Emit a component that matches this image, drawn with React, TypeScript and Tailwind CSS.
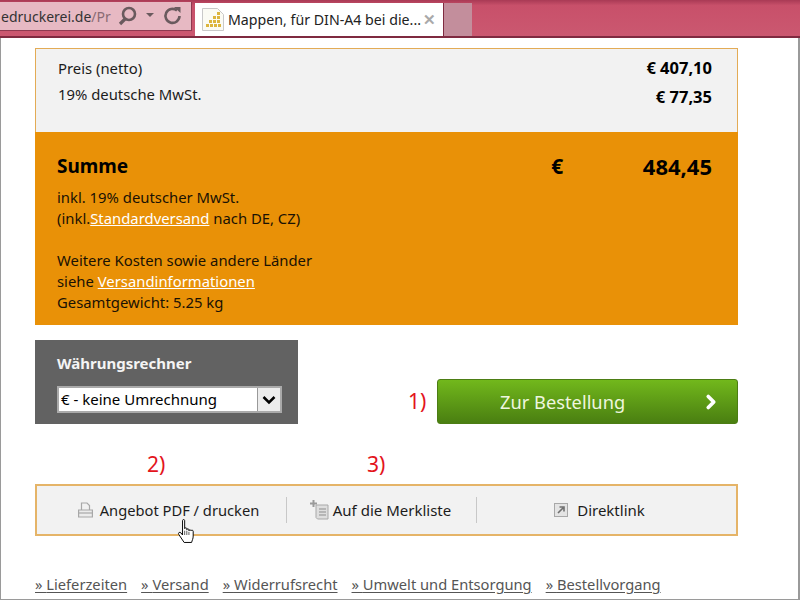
import { ChevronRight } from 'lucide-react';

const font = { fontFamily: '"Noto Sans", sans-serif' };

function PrintIcon() {
  return (
    <svg width="15" height="16" viewBox="0 0 15 16" fill="none" stroke="#a8a8a8" strokeWidth="1.200">
      <path d="M3.500 8V1h5.500L11.500 3.500V8" />
      <path d="M.600 8h13.800v7H.600z" fill="#ececec" />
      <path d="M.600 11h13.800" />
    </svg>
  );
}

function ListIcon() {
  return (
    <svg width="20" height="20" viewBox="0 0 20 20" fill="none">
      <path d="M3.500 0v7M0 3.500h7" stroke="#9a9a9a" strokeWidth="2" />
      <path d="M6 5h12v14H7.500L6 17.500z" fill="#dedede" stroke="#a8a8a8" />
      <path d="M9 9h7M9 12h7M9 15h7" stroke="#8d8d8d" />
    </svg>
  );
}

function LinkIcon() {
  return (
    <svg width="14" height="14" viewBox="0 0 14 14" fill="none">
      <rect x="0.500" y="0.500" width="13" height="13" fill="#e4e4e4" stroke="#a8a8a8" />
      <path d="M4 10l5-5M5.500 4H10v4.500" stroke="#6f6f6f" strokeWidth="1.600" />
    </svg>
  );
}

function HandCursor() {
  return (
    <svg width="18" height="24" viewBox="0 0 15.500 22.500">
      <path
        d="M4.500 1.500c0-1.300 2-1.300 2 0V9c0-1 2-1 2 0v1c0-1 2-1 2 0v1c0-1 2-1 2 0 .1-.7 2-.7 2 .5V16c0 2.500-1 4-1.500 6H6L1 14.500c-1-1.500.7-2.700 2-1.500l1.500 2z"
        fill="#fff"
        stroke="#000"
        strokeWidth="0.900"
        strokeLinejoin="round"
      />
      <path d="M6.500 11v4M8.500 11v4M10.500 12v3" stroke="#000" strokeWidth="0.600" />
    </svg>
  );
}

function BrowserBar() {
  return (
    <div className="flex h-[38px] items-end border-b-2 border-b-[#7f2a40] bg-gradient-to-b from-[#a93a55] via-[#c8506a] via-15% to-[#cb5870]">
      <div className="mb-[5px] flex h-[29px] w-[192px] items-center justify-between overflow-hidden border-r border-b border-[#8e3a50] bg-[#e7b9c3] pr-[8px]">
        <span className="whitespace-nowrap pl-[1px] text-[14px] text-[#333]">
          edruckerei.de<span className="text-[#8a6b73]">/Pr</span>
        </span>
        <svg width="66" height="20" viewBox="0 0 66 20" fill="none" stroke="#6a5a5e">
          <circle cx="12" cy="8" r="6" strokeWidth="2.600" />
          <path d="M8 13l-5 5" strokeWidth="3.200" />
          <path d="M29 7h8l-4 4z" fill="#6a5a5e" stroke="none" />
          <path d="M60 4.500a7 7 0 1 0 2.500 5.500" strokeWidth="2.600" />
          <path d="M57 1h6.500v6z" fill="#6a5a5e" stroke="none" />
        </svg>
      </div>
      <div className="ml-[3px] flex h-[33px] w-[248px] items-center bg-white pl-[7px] pr-[7px]">
        <svg width="22" height="23" viewBox="0 0 22 23" className="shrink-0">
          <path d="M.5.500h15l6 6v16H.5z" fill="#fbfbf4" stroke="#c9c9c9" />
          <g fill="#dcb53d">
            <rect x="15" y="4" width="3" height="3" />
            <rect x="11" y="8" width="3" height="3" />
            <rect x="15" y="8" width="3" height="3" />
            <rect x="7" y="12" width="3" height="3" />
            <rect x="11" y="12" width="3" height="3" />
            <rect x="15" y="12" width="3" height="3" />
            <rect x="4" y="16" width="3" height="3" />
            <rect x="8" y="16" width="3" height="3" />
            <rect x="12" y="16" width="3" height="3" />
            <rect x="16" y="16" width="3" height="3" />
          </g>
        </svg>
        <span className="ml-[4px] whitespace-nowrap text-[14.200px] text-[#222]">
          Mappen, für DIN-A4 bei die...
        </span>
        <span className="ml-auto text-[15px] font-bold leading-none text-[#a9a9a9]">✕</span>
      </div>
      <div className="h-[33px] w-[29px] border-l border-[#7f2a40] bg-[#c38e9c]" />
    </div>
  );
}

export default function App() {
  const links = ['Lieferzeiten', 'Versand', 'Widerrufsrecht', 'Umwelt und Entsorgung', 'Bestellvorgang'];

  return (
    <div className="relative h-[600px] w-[800px] overflow-hidden bg-white text-[14.850px] text-[#1c1c1c]" style={font}>
      <BrowserBar />
      <div className="h-[562px] border-x border-b border-[#9a9a9a] border-r-2 pl-[34px] pr-[60px] pt-[10px]">
        <div className="h-[84px] border border-b-0 border-[#e3ab55] bg-[#f2f2f2] pl-[22px] pr-[25px]">
          <div className="flex h-[36px] items-center justify-between pt-[3px]">
            <span>Preis (netto)</span>
            <span className="text-[16.500px] font-bold text-black">€ 407,10</span>
          </div>
          <div className="flex h-[24px] items-center justify-between">
            <span className="-mt-[5px]">19% deutsche MwSt.</span>
            <span className="text-[16.500px] font-bold text-black">€ 77,35</span>
          </div>
        </div>

        <div className="h-[193px] bg-[#e99107] pl-[22px] pr-[26px] pt-[21px] leading-[21px] text-[#1a1204]">
          <div className="flex h-[26px] items-center text-[19px] font-bold text-black">
            <span>Summe</span>
            <span className="ml-[423px] text-[21px]">€</span>
            <span className="ml-auto text-[22px]">484,45</span>
          </div>
          <p className="mt-[8px]">inkl. 19% deutscher MwSt.</p>
          <p>
            (inkl.<span className="text-white underline">Standardversand</span> nach DE, CZ)
          </p>
          <p className="mt-[21px]">Weitere Kosten sowie andere Länder</p>
          <p>
            siehe <span className="text-white underline">Versandinformationen</span>
          </p>
          <p>Gesamtgewicht: 5.25 kg</p>
        </div>

        <div className="mt-[15px] flex items-end">
          <div className="h-[84px] w-[263px] bg-[#626262] px-[22px] pt-[13px]">
            <h3 className="text-[15px] font-bold leading-[20px] text-[#f4f4f4]">Währungsrechner</h3>
            <div className="mt-[13px] flex h-[27px] w-[225px] items-center border-2 border-[#aaa] bg-white pl-[2px]">
              <span className="flex-1 text-[15px] leading-none text-black">€ - keine Umrechnung</span>
              <span className="flex h-full w-[23px] items-center justify-center border-l border-[#999] bg-[#ececec]">
                <svg width="14" height="10" viewBox="0 0 14 10" fill="none" stroke="#000" strokeWidth="2.500">
                  <path d="M1.500 2l5.500 5.500L12.500 2" />
                </svg>
              </span>
            </div>
          </div>
          <div className="ml-[139px] flex h-[45px] w-[301px] items-center justify-between rounded-[3px] border border-[#4c7d14] bg-gradient-to-b from-[#72b81c] to-[#4a7f11] pl-[62px] pr-[15px] text-[18.300px] text-[#eef6df]">
            <span>Zur Bestellung</span>
            <ChevronRight size={22} strokeWidth={4} className="text-white" />
          </div>
        </div>

        <div className="mt-[60px] flex h-[52px] items-center border-2 border-[#e5b468] bg-[#f2f2f2] text-[14.700px]">
          <div className="flex h-[26px] w-[250px] items-center justify-center gap-[7px] border-r border-[#c8c8c8] pl-[14px]">
            <PrintIcon />
            <span>Angebot PDF / drucken</span>
          </div>
          <div className="flex h-[26px] w-[190px] items-center justify-center gap-[3px] border-r border-[#c8c8c8] pr-[2px]">
            <ListIcon />
            <span className="text-[15px]">Auf die Merkliste</span>
          </div>
          <div className="flex flex-1 items-center justify-center gap-[9px] pr-[14px]">
            <LinkIcon />
            <span className="text-[15px]">Direktlink</span>
          </div>
        </div>

        <div className="mt-[38px] flex gap-[14px] text-[14.700px] leading-[20px] text-[#555]">
          {links.map((l) => (
            <span key={l} className="whitespace-nowrap underline underline-offset-2">
              » {l}
            </span>
          ))}
        </div>
      </div>

      <span className="absolute left-[408px] top-[388px] text-[21px] leading-[26px] text-[#e3141c]">1)</span>
      <span className="absolute left-[147px] top-[451px] text-[21px] leading-[26px] text-[#e3141c]">2)</span>
      <span className="absolute left-[367px] top-[451px] text-[21px] leading-[26px] text-[#e3141c]">3)</span>
      <div className="absolute left-[177px] top-[519px]">
        <HandCursor />
      </div>
    </div>
  );
}
